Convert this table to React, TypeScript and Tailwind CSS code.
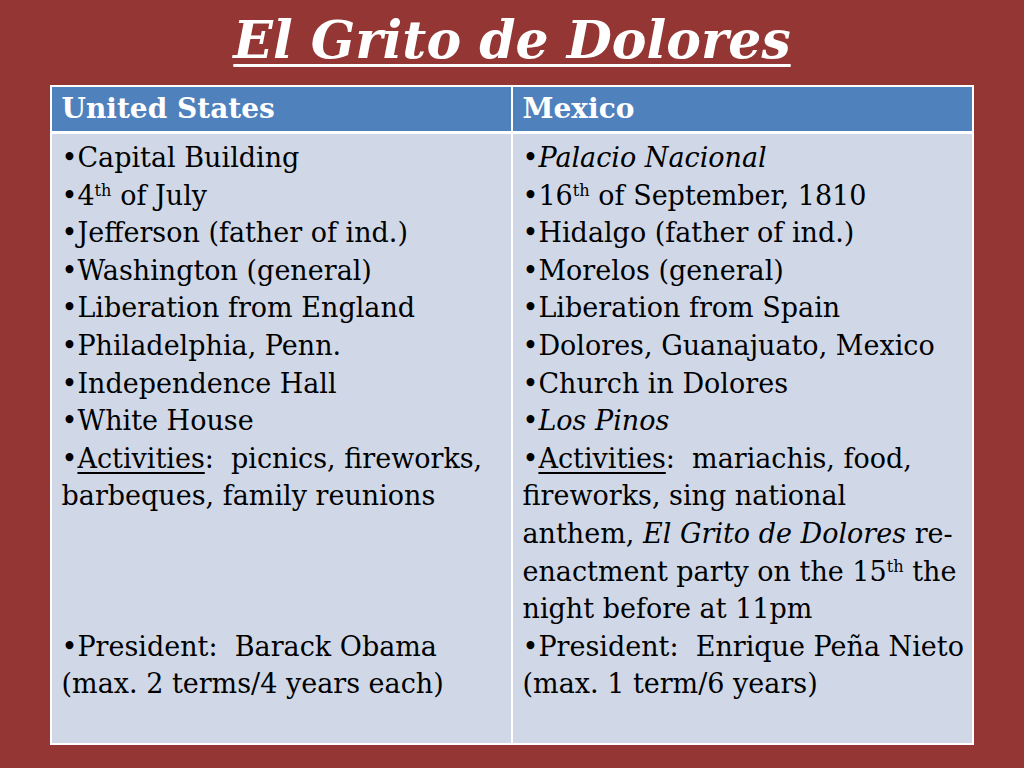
const serif = { fontFamily: '"DejaVu Serif", "Liberation Serif", serif' }

function Sup({ children }: { children: React.ReactNode }) {
  return <span className="text-[0.6em] align-[0.55em] leading-none">{children}</span>
}

const usLines: React.ReactNode[] = [
  <>•Capital Building</>,
  <>•4<Sup>th</Sup> of July</>,
  <>•Jefferson (father of ind.)</>,
  <>•Washington (general)</>,
  <>•Liberation from England</>,
  <>•Philadelphia, Penn.</>,
  <>•Independence Hall</>,
  <>•White House</>,
  <>•<span className="underline underline-offset-4">Activities</span>:&nbsp; picnics, fireworks,</>,
  <>barbeques, family reunions</>,
  <>&nbsp;</>,
  <>&nbsp;</>,
  <>&nbsp;</>,
  <>•President:&nbsp; Barack Obama</>,
  <>(max. 2 terms/4 years each)</>,
]

const mxLines: React.ReactNode[] = [
  <>•<i>Palacio Nacional</i></>,
  <>•16<Sup>th</Sup> of September, 1810</>,
  <>•Hidalgo (father of ind.)</>,
  <>•Morelos (general)</>,
  <>•Liberation from Spain</>,
  <>•Dolores, Guanajuato, Mexico</>,
  <>•Church in Dolores</>,
  <>•<i>Los Pinos</i></>,
  <>•<span className="underline underline-offset-4">Activities</span>:&nbsp; mariachis, food,</>,
  <>fireworks, sing national</>,
  <>anthem, <i>El Grito de Dolores</i> re-</>,
  <>enactment party on the 15<Sup>th</Sup> the</>,
  <>night before at 11pm</>,
  <>•President:&nbsp; Enrique Peña Nieto</>,
  <>(max. 1 term/6 years)</>,
]

function Column({ lines }: { lines: React.ReactNode[] }) {
  return (
    <div className="bg-[#d0d8e8] pl-[10px] pt-[5px] text-[27px] leading-[37.6px] text-black overflow-hidden">
      {lines.map((l, i) => (
        <div key={i} className="whitespace-nowrap">
          {l}
        </div>
      ))}
    </div>
  )
}

export default function App() {
  return (
    <div className="w-[1024px] h-[768px] bg-[#943634] flex flex-col items-center" style={serif}>
      <div className="h-[85px] flex items-start justify-center">
        <h1 className="text-[52px] leading-[80px] font-bold italic text-white underline decoration-[3px] underline-offset-[6px]">
          El Grito de Dolores
        </h1>
      </div>
      <div className="w-[924px] ml-[-1px] bg-white p-[2px] grid grid-cols-[459px_minmax(0,1fr)] gap-x-[2px] gap-y-[3px] grid-rows-[44px_609px]">
        <div className="bg-[#4f81bd] text-white font-bold text-[28px] leading-[44px] pl-[10px]">United States</div>
        <div className="bg-[#4f81bd] text-white font-bold text-[28px] leading-[44px] pl-[10px]">Mexico</div>
        <Column lines={usLines} />
        <Column lines={mxLines} />
      </div>
    </div>
  )
}
